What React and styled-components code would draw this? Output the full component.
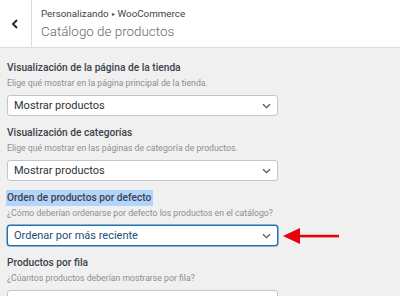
import React from "react";
import styled, { createGlobalStyle } from "styled-components";

const Global = createGlobalStyle`
  html, body { margin: 0; padding: 0; }
  body {
    width: 400px;
    height: 296px;
    overflow: hidden;
    background: #f0f0f1;
    font-family: Roboto, "Liberation Sans", sans-serif;
    -webkit-font-smoothing: antialiased;
  }
`;

const Page = styled.div`
  width: 400px;
  height: 296px;
  overflow: hidden;
  background: #f0f0f1;
  display: flex;
  flex-direction: column;
`;

const Header = styled.header`
  height: 47px;
  flex: none;
  background: #fff;
  border-bottom: 1px solid #dcdcde;
  display: flex;
  align-items: stretch;
`;

const BackButton = styled.div`
  width: 30px;
  flex: none;
  border-right: 1px solid #dcdcde;
  display: flex;
  align-items: center;
  justify-content: center;
  padding-right: 1px;
`;

const TitleBlock = styled.div`
  display: flex;
  flex-direction: column;
  padding: 8px 0 0 9px;
`;

const Crumb = styled.span`
  font-size: 9.8px;
  line-height: 12px;
  color: #3c434a;
  white-space: nowrap;
`;

const Sep = styled.span`
  font-size: 6px;
  vertical-align: 1px;
  margin: 0 3px;
`;

const Title = styled.h1`
  margin: 3px 0 0;
  font-size: 13.4px;
  line-height: 18px;
  font-weight: 300;
  color: #646970;
  white-space: nowrap;
`;

const Content = styled.main`
  padding: 12px 0 0 7px;
  display: flex;
  flex-direction: column;
  gap: 9px;
`;

const Section = styled.section`
  display: flex;
  flex-direction: column;
`;

const Heading = styled.h2`
  margin: 0;
  font-size: 10.2px;
  line-height: 16px;
  font-weight: 500;
  color: #3c434a;
  white-space: nowrap;
  align-self: flex-start;
  background: ${(p) => (p.$highlight ? "#b3d4fc" : "transparent")};
  margin-left: ${(p) => (p.$highlight ? "-1px" : "0")};
  padding: ${(p) => (p.$highlight ? "0 2px 0 1px" : "0")};
`;

const Desc = styled.p`
  margin: 0;
  font-size: 8.7px;
  line-height: 14px;
  color: #8c8f94;
  white-space: nowrap;
`;

const SelectRow = styled.div`
  display: flex;
  align-items: center;
  gap: 5px;
  margin-top: 5px;
`;

const Select = styled.div`
  box-sizing: border-box;
  width: 271px;
  height: 21px;
  background: #fff;
  border: 1px solid ${(p) => (p.$focus ? "#2271b1" : "#c3c4c7")};
  box-shadow: ${(p) => (p.$focus ? "0 0 0 0.5px #2271b1" : "none")};
  border-radius: 3px;
  display: flex;
  align-items: center;
  justify-content: space-between;
  padding: 0 6px 0 6px;
  font-size: 11px;
  color: ${(p) => (p.$focus ? "#1d4f7c" : "#2c3338")};
`;

const Chevron = () => (
  <svg width="9" height="6" viewBox="0 0 9 6">
    <path d="M1 1.2 L4.5 4.6 L8 1.2" fill="none" stroke="#50575e" strokeWidth="1.3" />
  </svg>
);

const Arrow = () => (
  <svg width="56" height="20" viewBox="0 0 56 20">
    <rect x="14" y="8.8" width="42" height="2.6" fill="#e8000b" />
    <polygon points="0,10 17,2 17,18" fill="#e8000b" />
  </svg>
);

const sections = [
  {
    title: "Visualización de la página de la tienda",
    desc: "Elige qué mostrar en la página principal de la tienda.",
    value: "Mostrar productos",
  },
  {
    title: "Visualización de categorías",
    desc: "Elige qué mostrar en las páginas de categoría de productos.",
    value: "Mostrar productos",
  },
  {
    title: "Orden de productos por defecto",
    desc: "¿Cómo deberían ordenarse por defecto los productos en el catálogo?",
    value: "Ordenar por más reciente",
    focus: true,
  },
  {
    title: "Productos por fila",
    desc: "¿Cúantos productos deberían mostrarse por fila?",
    value: "",
  },
];

export default function App() {
  return (
    <Page>
      <Global />
      <Header>
        <BackButton>
          <svg width="8" height="10" viewBox="0 0 8 10">
            <path d="M6 1 L2 5 L6 9" fill="none" stroke="#1d2327" strokeWidth="1.8" />
          </svg>
        </BackButton>
        <TitleBlock>
          <Crumb>
            Personalizando<Sep>▸</Sep>WooCommerce
          </Crumb>
          <Title>Catálogo de productos</Title>
        </TitleBlock>
      </Header>
      <Content>
        {sections.map((s, i) => (
          <Section key={i}>
            <Heading $highlight={s.focus}>{s.title}</Heading>
            <Desc>{s.desc}</Desc>
            <SelectRow>
              <Select $focus={s.focus}>
                <span>{s.value}</span>
                <Chevron />
              </Select>
              {s.focus && <Arrow />}
            </SelectRow>
          </Section>
        ))}
      </Content>
    </Page>
  );
}
